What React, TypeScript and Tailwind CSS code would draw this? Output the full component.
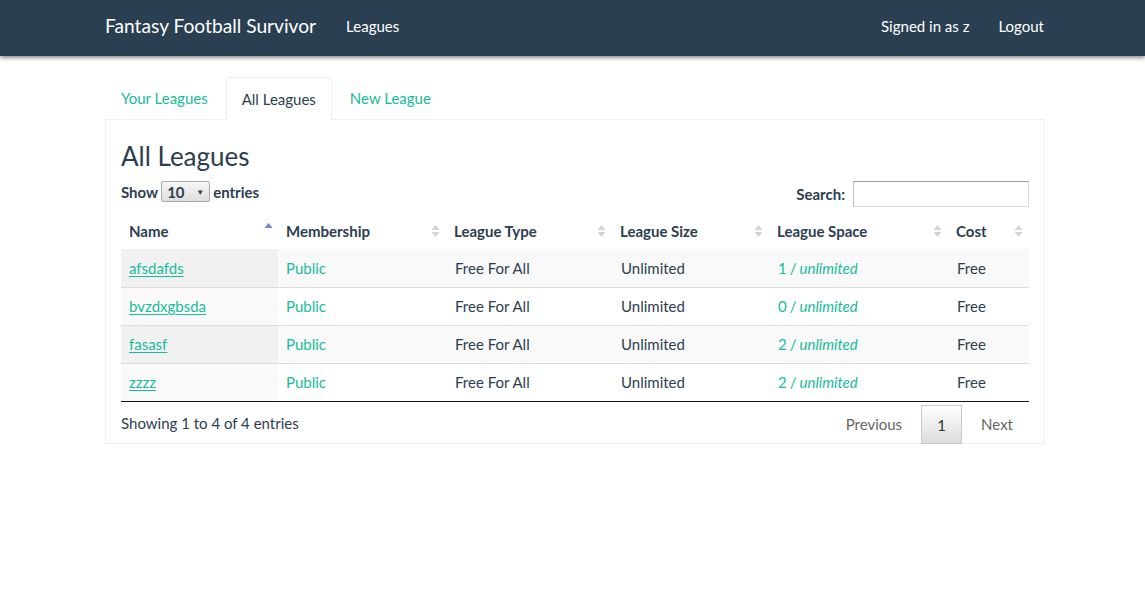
import React from "react";

const rows = [
  { name: "afsdafds", space: "1" },
  { name: "bvzdxgbsda", space: "0" },
  { name: "fasasf", space: "2" },
  { name: "zzzz", space: "2" },
];

const columns = [
  { label: "Name", width: "w-[157px]" },
  { label: "Membership", width: "w-[168px]" },
  { label: "League Type", width: "w-[166px]" },
  { label: "League Size", width: "w-[157px]" },
  { label: "League Space", width: "w-[179px]" },
  { label: "Cost", width: "w-[81px]" },
];

function SortIcon({ active }: { active?: boolean }) {
  if (active) {
    return (
      <svg width="9" height="14" viewBox="0 0 9 14" className="block">
        <path d="M4.5 1 L8.5 6 L0.5 6 Z" fill="#7482d8" />
      </svg>
    );
  }
  return (
    <svg width="9" height="14" viewBox="0 0 9 14" className="block">
      <path d="M4.5 1 L8.5 6 L0.5 6 Z" fill="#d5d5d5" />
      <path d="M4.5 13 L8.5 8 L0.5 8 Z" fill="#d5d5d5" />
    </svg>
  );
}

export default function App() {
  return (
    <div className="min-h-[613px] bg-white text-[15px] text-[#2c3e50] font-['Lato','Open_Sans',sans-serif]">
      <nav className="h-14 bg-[#2a3f51] shadow-[0_2px_4px_rgba(0,0,0,0.45)]">
        <div className="w-[940px] ml-[105px] h-full flex items-center pb-[3px] text-white">
          <span className="text-[19.2px]">Fantasy Football Survivor</span>
          <span className="ml-[30px]">Leagues</span>
          <span className="ml-auto">Signed in as z</span>
          <span className="ml-[29px] mr-[1px]">Logout</span>
        </div>
      </nav>

      <div className="w-[940px] ml-[105px] pt-[21px]">
        <ul className="flex h-[43px] border-b border-[#ecf0f1]">
          <li className="px-[15px] mr-[2px] flex items-center border border-transparent text-[#18bc9c]">
            Your Leagues
          </li>
          <li className="px-[15px] mr-[2px] flex items-center border border-[#ecf0f1] border-b-white rounded-t-[4px] bg-white -mb-px h-[44px]">
            All Leagues
          </li>
          <li className="px-[15px] flex items-center border border-transparent text-[#18bc9c]">
            New League
          </li>
        </ul>

        <div className="border border-t-0 border-[#ecf0f1] px-[15px] pt-[22px]">
          <h3 className="text-[26px] leading-[1.1] mb-[10px]">All Leagues</h3>

          <div className="flex items-end justify-between">
            <div className="flex items-center font-bold gap-[3px] pb-[4px]">
              <span>Show</span>
              <span className="flex items-center justify-between w-[49px] h-[21px] pl-[5px] pr-[5px] border border-[#a9a9a9] rounded-[2px] bg-gradient-to-b from-[#f6f6f6] to-[#dedede] text-[15px]">
                <span>10</span>
                <span className="text-[8px]">▼</span>
              </span>
              <span>entries</span>
            </div>
            <div className="flex items-center font-bold">
              <span className="mr-[8px] mt-[1px]">Search:</span>
              <span className="block w-[176px] h-[26px] border border-[#dcdcdc] border-t-[#9a9a9a] border-l-[#bcbcbc]" />
            </div>
          </div>

          <table className="w-[908px] table-fixed border-collapse mt-[6px]">
            <thead>
              <tr className="h-[36px]">
                {columns.map((c, i) => (
                  <th key={c.label} className={`${c.width} text-left font-bold pl-[8px] pr-[6px]`}>
                    <div className="flex items-center justify-between">
                      <span>{c.label}</span>
                      <span className={i === 0 ? "-mt-[5px] mr-[-1px]" : ""}>
                        <SortIcon active={i === 0} />
                      </span>
                    </div>
                  </th>
                ))}
              </tr>
            </thead>
            <tbody>
              {rows.map((r, i) => {
                const odd = i % 2 === 0;
                return (
                  <tr
                    key={r.name}
                    className={`h-[38px] ${i > 0 ? "border-t border-[#dddddd]" : ""} ${
                      odd ? "bg-[#f9f9f9]" : "bg-white"
                    } ${i === rows.length - 1 ? "border-b border-b-[#111111]" : ""}`}
                  >
                    <td className={`pl-[8px] ${odd ? "bg-[#f1f1f1]" : "bg-[#f9f9f9]"}`}>
                      <span className="text-[#18bc9c] underline underline-offset-2">{r.name}</span>
                    </td>
                    <td className="pl-[8px] text-[#18bc9c]">Public</td>
                    <td className="pl-[9px]">Free For All</td>
                    <td className="pl-[9px]">Unlimited</td>
                    <td className="pl-[9px] text-[#18bc9c]">
                      {r.space}
                      <span className="ml-[3px]">/</span>
                      <span className="italic ml-[3px]">unlimited</span>
                    </td>
                    <td className="pl-[9px]">Free</td>
                  </tr>
                );
              })}
            </tbody>
          </table>

          <div className="flex items-center justify-between h-[42px] -mb-px">
            <span className="mt-[1px]">Showing 1 to 4 of 4 entries</span>
            <div className="flex items-center h-full">
              <span className="px-[15px] mt-[4px] text-[#666666]">Previous</span>
              <span className="ml-[4px] w-[41px] h-[39px] mt-[3px] pt-[2px] flex items-center justify-center border border-[#cacaca] bg-gradient-to-b from-[#ffffff] to-[#dcdcdc] text-[#333333]">
                1
              </span>
              <span className="ml-[4px] px-[15px] mt-[4px] mr-[1px] text-[#666666]">Next</span>
            </div>
          </div>
        </div>
      </div>
    </div>
  );
}
